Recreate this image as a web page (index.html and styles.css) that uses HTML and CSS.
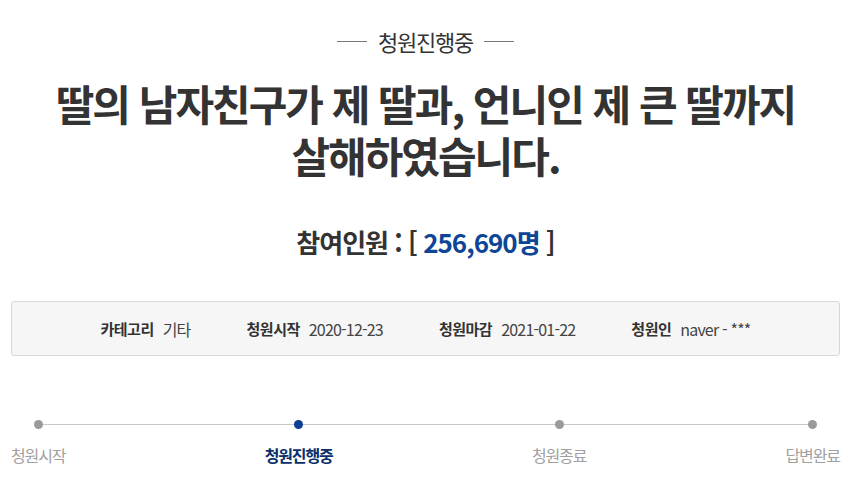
FILE: index.html
```html
<!DOCTYPE html>
<html lang="ko">
<head>
<meta charset="utf-8">
<title>청원진행중</title>
<link rel="stylesheet" href="styles.css">
</head>
<body>
<div class="page">
  <div class="status"><span class="status-text">청원진행중</span></div>
  <h1 class="title"><span class="title-line">딸의 남자친구가 제 딸과, 언니인 제 큰 딸까지</span><span class="title-line">살해하였습니다.</span></h1>
  <h2 class="count">참여인원 : [ <span class="count-num">256,690명</span> ]</h2>
  <ul class="meta">
    <li class="meta-item"><strong class="meta-label">카테고리</strong><span class="meta-value">기타</span></li>
    <li class="meta-item"><strong class="meta-label">청원시작</strong><span class="meta-value">2020-12-23</span></li>
    <li class="meta-item"><strong class="meta-label">청원마감</strong><span class="meta-value">2021-01-22</span></li>
    <li class="meta-item"><strong class="meta-label">청원인</strong><span class="meta-value">naver - ***</span></li>
  </ul>
  <ol class="steps">
    <li class="step"><span class="step-dot"></span><span class="step-label">청원시작</span></li>
    <li class="step step-active"><span class="step-dot"></span><span class="step-label">청원진행중</span></li>
    <li class="step"><span class="step-dot"></span><span class="step-label">청원종료</span></li>
    <li class="step"><span class="step-dot"></span><span class="step-label">답변완료</span></li>
  </ol>
</div>
</body>
</html>
```
FILE: styles.css
```css
* { box-sizing: border-box; }
html, body { margin: 0; padding: 0; background: #fff; }
body {
  font-family: "Noto Sans CJK KR", "Noto Sans", sans-serif;
  color: #333;
}
.page { padding-top: 26px; }

.status {
  display: flex;
  justify-content: center;
  align-items: center;
  gap: 11px;
  height: 30px;
}
.status::before, .status::after {
  content: "";
  width: 30px;
  height: 1px;
  background: #777;
}
.status-text {
  font-size: 22px;
  line-height: 30px;
  letter-spacing: -1.2px;
  color: #333;
}

.title {
  margin: 21px 0 0;
  display: flex;
  flex-direction: column;
  align-items: center;
  font-size: 42px;
  font-weight: 700;
  letter-spacing: -2px;
  color: #333;
}
.title-line {
  display: block;
  height: 52px;
  line-height: 52px;
  white-space: nowrap;
}

.count {
  margin: 44px 0 0;
  text-align: center;
  font-size: 26px;
  line-height: 34px;
  font-weight: 700;
  letter-spacing: -1px;
  color: #333;
}
.count-num { color: #0d4597; }

.meta {
  list-style: none;
  margin: 42px 11px 0;
  padding: 0;
  height: 55px;
  display: flex;
  justify-content: center;
  align-items: center;
  gap: 56px;
  background: #f6f6f6;
  border: 1px solid #d8d8d8;
  border-radius: 3px;
  font-size: 15px;
}
.meta-item { display: flex; align-items: center; gap: 9px; }
.meta-label { font-weight: 700; color: #333; letter-spacing: -0.5px; }
.meta-value { color: #444; font-size: 16px; letter-spacing: -0.8px; }

.steps {
  list-style: none;
  margin: 64px 11px 0;
  padding: 0;
  display: flex;
  justify-content: space-between;
  position: relative;
}
.steps::before {
  content: "";
  position: absolute;
  left: 26px;
  right: 27px;
  top: 4px;
  height: 1px;
  background: #c8c8c8;
}
.step {
  display: flex;
  flex-direction: column;
  align-items: center;
  position: relative;
}
.step-dot {
  width: 9px;
  height: 9px;
  border-radius: 50%;
  background: #9a9a9a;
}
.step-label {
  margin-top: 15px;
  font-size: 16px;
  line-height: 22px;
  letter-spacing: -1.1px;
  color: #a0a0a0;
}
.step-active .step-dot { background: #0b3f91; }
.step-active .step-label { color: #0b2f6b; font-weight: 700; }
```
